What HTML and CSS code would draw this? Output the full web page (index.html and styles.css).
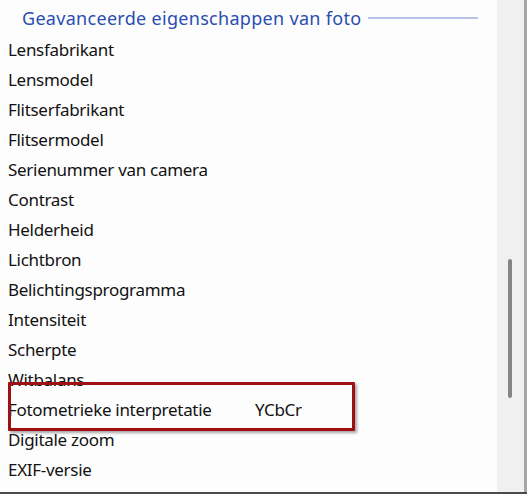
FILE: index.html
```html
<!DOCTYPE html>
<html>
<head>
<meta charset="utf-8">
<link rel="stylesheet" href="styles.css">
</head>
<body>
<div class="window">
  <div class="pane">
    <div class="list">
      <div class="group">
        <span class="group-title">Geavanceerde eigenschappen van foto</span>
        <span class="group-line"></span>
      </div>
      <div class="row"><span class="name">Lensfabrikant</span></div>
      <div class="row"><span class="name">Lensmodel</span></div>
      <div class="row"><span class="name">Flitserfabrikant</span></div>
      <div class="row"><span class="name">Flitsermodel</span></div>
      <div class="row"><span class="name">Serienummer van camera</span></div>
      <div class="row"><span class="name">Contrast</span></div>
      <div class="row"><span class="name">Helderheid</span></div>
      <div class="row"><span class="name">Lichtbron</span></div>
      <div class="row"><span class="name">Belichtingsprogramma</span></div>
      <div class="row"><span class="name">Intensiteit</span></div>
      <div class="row"><span class="name">Scherpte</span></div>
      <div class="row"><span class="name">Witbalans</span></div>
      <div class="row"><span class="name">Fotometrieke interpretatie</span><span class="value">YCbCr</span></div>
      <div class="row"><span class="name">Digitale zoom</span></div>
      <div class="row"><span class="name">EXIF-versie</span></div>
      <div class="highlight"></div>
    </div>
    <div class="scrollbar"><div class="thumb"></div></div>
    <div class="edge"></div>
  </div>
  <div class="bottom"></div>
</div>
</body>
</html>
```
FILE: styles.css
```css
html, body {
  margin: 0;
  padding: 0;
  background: #ffffff;
}
.window {
  width: 527px;
  height: 494px;
  display: flex;
  flex-direction: column;
  overflow: hidden;
  font-family: "Noto Sans", "Liberation Sans", sans-serif;
}
.pane {
  flex: 1;
  display: flex;
  min-height: 0;
}
.list {
  position: relative;
  width: 497px;
  background: #fdfdfd;
  padding-top: 2px;
  box-sizing: border-box;
}
.group {
  height: 32px;
  display: flex;
  align-items: center;
  padding-left: 22px;
  padding-bottom: 1px;
  box-sizing: border-box;
  gap: 7px;
}
.group-title {
  color: #2a4db0;
  font-size: 18px;
  letter-spacing: 0.3px;
}
.group-line {
  width: 110px;
  height: 2px;
  background: #b5c3e6;
  margin-top: 1px;
}
.row {
  height: 30px;
  display: flex;
  align-items: center;
  padding-left: 8px;
  color: #121212;
  font-size: 17px;
  letter-spacing: -0.3px;
}
.name {
  width: 247px;
}
.value {
  color: #121212;
}
.highlight {
  position: absolute;
  left: 8px;
  top: 382px;
  width: 341px;
  height: 43px;
  border: 3px solid #a00f14;
  border-radius: 1px;
  box-shadow: 2px 2px 3px rgba(0, 0, 0, 0.35);
}
.scrollbar {
  width: 27px;
  background: #f0f0f0;
  position: relative;
}
.thumb {
  position: absolute;
  left: 11px;
  top: 259px;
  width: 4px;
  height: 139px;
  background: #858585;
  border-radius: 2px;
}
.edge {
  width: 3px;
  background: #a6a6a6;
}
.bottom {
  height: 2px;
  background: #4a4a4a;
}
```
